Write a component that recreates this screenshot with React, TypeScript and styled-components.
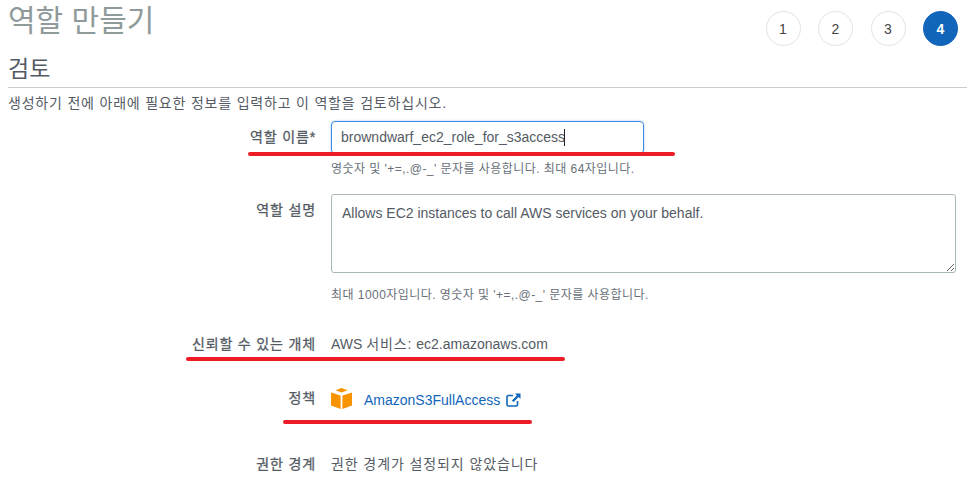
import React, { FC, ReactNode } from 'react';
import styled, { createGlobalStyle } from 'styled-components';

const GlobalStyle = createGlobalStyle`
  html, body {
    margin: 0;
    padding: 0;
    background: #fff;
    overflow: hidden;
  }
  body {
    font-family: 'Liberation Sans', Arial, 'Noto Sans CJK KR', sans-serif;
    color: #545b64;
  }
`;

const Page = styled.div`
  width: 980px;
  height: 486px;
  box-sizing: border-box;
  padding: 0 13px 0 8px;
  overflow: hidden;
`;

const Header = styled.header`
  display: flex;
  justify-content: space-between;
  height: 52px;
`;

const Title = styled.h1`
  margin: 0;
  padding-top: 1px;
  font-size: 30px;
  line-height: 40px;
  font-weight: 400;
  color: #8f9a9b;
`;

const Steps = styled.ol`
  display: flex;
  gap: 17.5px;
  list-style: none;
  margin: 11px 9px 0 0;
  padding: 0;
`;

const Step = styled.li<{ $active?: boolean }>`
  width: 35px;
  height: 35px;
  box-sizing: border-box;
  border-radius: 50%;
  display: flex;
  align-items: center;
  justify-content: center;
  font-size: 14px;
  font-weight: ${({ $active }) => ($active ? 700 : 400)};
  color: ${({ $active }) => ($active ? '#fff' : '#444')};
  background: ${({ $active }) => ($active ? '#1166bb' : '#fff')};
  border: 1px solid ${({ $active }) => ($active ? '#1166bb' : '#e1e4e4')};
`;

const Section = styled.h2`
  margin: 0;
  height: 36px;
  box-sizing: border-box;
  padding-top: 2px;
  font-size: 23px;
  line-height: 30px;
  font-weight: 400;
  color: #545b64;
  border-bottom: 1px solid #ccc;
`;

const Intro = styled.p`
  margin: 0;
  height: 33px;
  font-size: 14px;
  letter-spacing: 0.8px;
  line-height: 30px;
  color: #545b64;
`;

const Row = styled.div<{ $height: number }>`
  position: relative;
  display: grid;
  grid-template-columns: 308px 1fr;
  column-gap: 15px;
  height: ${({ $height }) => $height}px;
`;

const Label = styled.div<{ $top?: number }>`
  text-align: right;
  font-size: 14px;
  letter-spacing: 0.85px;
  font-weight: 400;
  -webkit-text-stroke: 0.3px #545b64;
  line-height: 20px;
  color: #545b64;
  padding-top: ${({ $top }) => $top ?? 0}px;
`;

const Value = styled.div<{ $top?: number }>`
  font-size: 14px;
  line-height: 20px;
  color: #545b64;
  padding-top: ${({ $top }) => $top ?? 0}px;
`;

const Hangul = styled.span`
  letter-spacing: 0.9px;
`;

const Field = styled.div`
  width: 313px;
  height: 33px;
  box-sizing: border-box;
  border: 1px solid #3f8ae6;
  border-radius: 4px;
  box-shadow: 0 0 2px rgba(43, 124, 224, 0.5);
  padding: 0 9px;
  font-size: 14px;
  line-height: 31px;
  color: #545b64;
  white-space: nowrap;
`;

const Caret = styled.span`
  display: inline-block;
  width: 1px;
  height: 17px;
  margin-left: -1px;
  background: #222;
  vertical-align: -4px;
`;

const Description = styled.textarea`
  display: block;
  width: 625px;
  height: 79px;
  box-sizing: border-box;
  margin: 0;
  border: 1px solid #aab7b8;
  border-radius: 3px;
  padding: 8px 10px;
  font-family: 'Liberation Sans', Arial, sans-serif;
  font-size: 14px;
  line-height: 20px;
  color: #545b64;
  outline: none;
  resize: vertical;
`;

const Hint = styled.div<{ $top: number }>`
  font-size: 12px;
  letter-spacing: 0.45px;
  line-height: 16px;
  color: #687078;
  padding-top: ${({ $top }) => $top}px;
`;

const Policy = styled.div`
  display: flex;
  align-items: flex-start;
  gap: 12px;
  padding-top: 8px;
`;

const PolicyLink = styled.a`
  display: inline-flex;
  align-items: center;
  gap: 6px;
  padding-top: 2px;
  font-size: 14px;
  line-height: 20px;
  color: #1166bb;
  text-decoration: none;
`;

const Mark = styled.div<{ $left: number; $width: number; $top: number }>`
  position: absolute;
  left: ${({ $left }) => $left}px;
  width: ${({ $width }) => $width}px;
  top: ${({ $top }) => $top}px;
  height: 4px;
  border-radius: 2px;
  background: #ee1c25;
`;

const BoxIcon: FC = () => (
  <svg width="21" height="21" viewBox="0 0 21 21" aria-hidden="true">
    <path d="M10.5 0 L16.5 2.2 L10.5 4.4 L4.5 2.2 Z" fill="#f79400" />
    <path d="M0 4.4 L9.6 7.6 V21 L0 17.4 Z" fill="#f79400" />
    <path d="M11.4 7.6 L21 4.4 V17.4 L11.4 21 Z" fill="#f79400" />
  </svg>
);

const ExternalIcon: FC = () => (
  <svg width="15" height="14" viewBox="0 0 15 14" fill="none" aria-hidden="true">
    <path
      d="M11.5 8 V11.5 A1.5 1.5 0 0 1 10 13 H2.5 A1.5 1.5 0 0 1 1 11.5 V4 A1.5 1.5 0 0 1 2.5 2.5 H7"
      stroke="#1166bb"
      strokeWidth="1.6"
    />
    <path d="M9 0.5 H14.5 V6 L12.6 4.1 L7.6 9.1 L5.9 7.4 L10.9 2.4 Z" fill="#1166bb" />
  </svg>
);

interface FormRowProps {
  height: number;
  label: ReactNode;
  labelTop?: number;
  children: ReactNode;
}

const FormRow: FC<FormRowProps> = ({ height, label, labelTop, children }) => (
  <Row $height={height}>
    <Label $top={labelTop}>{label}</Label>
    <div>{children}</div>
  </Row>
);

const App: FC = () => (
  <Page>
    <GlobalStyle />
    <Header>
      <Title>역할 만들기</Title>
      <Steps>
        {[1, 2, 3, 4].map(step => (
          <Step key={step} $active={step === 4}>
            {step}
          </Step>
        ))}
      </Steps>
    </Header>
    <Section>검토</Section>
    <Intro>생성하기 전에 아래에 필요한 정보를 입력하고 이 역할을 검토하십시오.</Intro>

    <Row $height={73}>
      <Label $top={6}>역할 이름*</Label>
      <div>
        <Field>
          browndwarf_ec2_role_for_s3access
          <Caret />
        </Field>
        <Hint $top={7}>영숫자 및 '+=,.@-_' 문자를 사용합니다. 최대 64자입니다.</Hint>
      </div>
      <Mark $left={240} $width={427} $top={31} />
    </Row>

    <FormRow height={134} label="역할 설명" labelTop={6}>
      <Description readOnly defaultValue="Allows EC2 instances to call AWS services on your behalf." />
      <Hint $top={14}>최대 1000자입니다. 영숫자 및 '+=,.@-_' 문자를 사용합니다.</Hint>
    </FormRow>

    <Row $height={52}>
      <Label $top={6}>신뢰할 수 있는 개체</Label>
      <Value $top={6}>
        AWS <Hangul>서비스:</Hangul> ec2.amazonaws.com
      </Value>
      <Mark $left={178} $width={379} $top={29} />
    </Row>

    <Row $height={68}>
      <Label $top={8}>정책</Label>
      <Policy>
        <BoxIcon />
        <PolicyLink href="#">
          AmazonS3FullAccess
          <ExternalIcon />
        </PolicyLink>
      </Policy>
      <Mark $left={275} $width={249} $top={40} />
    </Row>

    <FormRow height={40} label="권한 경계" labelTop={6}>
      <Value $top={6}>
        <Hangul>권한 경계가 설정되지 않았습니다</Hangul>
      </Value>
    </FormRow>
  </Page>
);

export default App;
